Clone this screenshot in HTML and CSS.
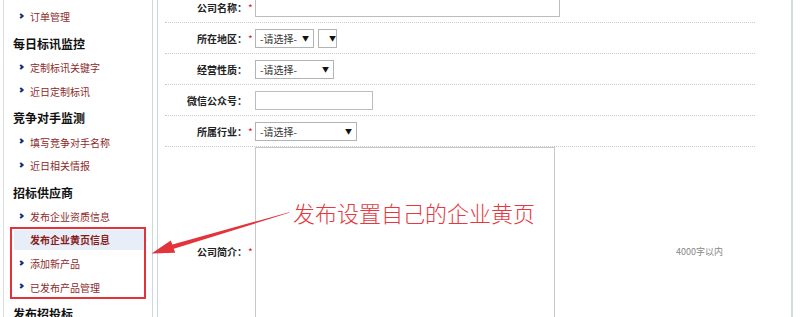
FILE: index.html
```html
<!DOCTYPE html>
<html lang="zh-CN">
<head>
    <meta charset="UTF-8">
    <title>企业黄页</title>
    <link rel="stylesheet" href="styles.css">
</head>
<body>
    <div class="page">
        <div class="sidebar">
            <ul class="menu">
                <li class="item">订单管理</li>
                <li class="head">每日标讯监控</li>
                <li class="item">定制标讯关键字</li>
                <li class="item">近日定制标讯</li>
                <li class="head">竞争对手监测</li>
                <li class="item">填写竞争对手名称</li>
                <li class="item">近日相关情报</li>
                <li class="head">招标供应商</li>
                <li class="item">发布企业资质信息</li>
                <li class="item active">发布企业黄页信息</li>
                <li class="item">添加新产品</li>
                <li class="item">已发布产品管理</li>
                <li class="head">发布招投标</li>
            </ul>
        </div>

        <div class="main">
            <div class="form">
                <div class="row">
                    <label class="lbl">公司名称：</label><span class="req">*</span>
                    <input type="text" class="text name">
                </div>
                <div class="row">
                    <label class="lbl">所在地区：</label><span class="req">*</span>
                    <div class="select s-prov"><span>-请选择-</span><i>▼</i></div>
                    <div class="select s-city"><span></span><i>▼</i></div>
                </div>
                <div class="row">
                    <label class="lbl">经营性质：</label><span class="req"></span>
                    <div class="select s-type"><span>-请选择-</span><i>▼</i></div>
                </div>
                <div class="row">
                    <label class="lbl">微信公众号：</label><span class="req"></span>
                    <input type="text" class="text wechat">
                </div>
                <div class="row">
                    <label class="lbl">所属行业：</label><span class="req">*</span>
                    <div class="select s-trade"><span>-请选择-</span><i>▼</i></div>
                </div>
                <div class="row last">
                    <label class="lbl">公司简介：</label><span class="req">*</span>
                    <textarea class="intro"></textarea>
                    <span class="hint">4000字以内</span>
                </div>
            </div>
        </div>
    </div>

    <!-- annotation drawn over the screenshot -->
    <div class="hl-box"></div>
    <div class="note">发布设置自己的企业黄页</div>
    <svg class="arrow" width="800" height="317" viewBox="0 0 800 317">
        <polygon fill="#e3343c" points="289,212.2 172.4,244.6 170.8,240.6 151.5,253.4 175.2,252.8 173.8,248.8 289.2,212.8"/>
    </svg>
</body>
</html>
```

FILE: styles.css
```css
body {
    margin: 0;
    background: #fff;
    font-family: "Noto Sans CJK SC", "Liberation Sans", sans-serif;
    overflow: hidden;
    width: 800px;
    height: 317px;
    position: relative;
}

.page {
    display: flex;
    align-items: flex-start;
    height: 317px;
}

/* left menu */
.sidebar {
    width: 148px;
    height: 317px;
    margin-left: 3px;
    border-left: 1px solid #d5dde5;
    border-right: 1px solid #cdd6de;
}

.menu {
    list-style: none;
    margin: 0;
    padding: 5px 0 0 0;
}

.menu .item {
    position: relative;
    padding-left: 26px;
    height: 23.5px;
    line-height: 23.5px;
    font-size: 10px;
    color: #8c2a2a;
    white-space: nowrap;
}

.menu .item::before {
    content: "";
    position: absolute;
    left: 15px;
    top: 8.5px;
    width: 2px;
    height: 2px;
    border-top: 2px solid #16307a;
    border-right: 2px solid #16307a;
    transform: rotate(45deg);
}

.menu .item.active {
    margin: 1.75px 6px 1.75px 10px;
    padding-left: 16px;
    height: 20px;
    line-height: 20px;
    background: #e7eef8;
    font-weight: bold;
    color: #8a1c1c;
}

.menu .item.active::before {
    display: none;
}

.menu .head {
    padding: 3px 0 0 9px;
    height: 24.5px;
    line-height: 24.5px;
    font-size: 12px;
    font-weight: bold;
    color: #111;
}

/* form panel */
.main {
    width: 633px;
    height: 317px;
    margin-left: 4px;
    border-left: 1px solid #cdd6de;
    border-right: 2px solid #d3dfdf;
}

.form {
    width: 590px;
    margin: -8px 0 0 7px;
}

.row {
    display: flex;
    align-items: center;
    height: 30px;
    border-bottom: 1px dotted #cacaca;
}

.row.last {
    height: auto;
    border-bottom: none;
}

.lbl {
    width: 82px;
    text-align: right;
    font-size: 10px;
    font-weight: bold;
    color: #222;
    white-space: nowrap;
}

.req {
    width: 7px;
    padding-left: 1px;
    font-size: 10px;
    color: #d42020;
}

.text {
    box-sizing: border-box;
    height: 19px;
    margin: 0;
    padding: 0;
    border: 1px solid #bdbdbd;
    background: #fff;
}

.name { width: 305px; }
.wechat { width: 118px; }

.select {
    box-sizing: border-box;
    display: flex;
    align-items: center;
    justify-content: space-between;
    height: 19px;
    padding: 0 4px 0 4px;
    border: 1px solid #b3b3b3;
    background: #fff;
    font-size: 10px;
    color: #333;
}

.select i {
    font-style: normal;
    font-size: 7px;
    color: #111;
}

.s-prov { width: 59px; }
.s-city { width: 19px; margin-left: 4px; padding: 0 0 0 5px; }
.s-type { width: 79px; }
.s-trade { width: 102px; }

.intro {
    box-sizing: border-box;
    width: 300px;
    height: 208px;
    margin: 0;
    border: 1px solid #c8c8c8;
    resize: none;
}

.hint {
    margin-left: 121px;
    font-size: 9px;
    color: #888;
}

/* annotation */
.hl-box {
    position: absolute;
    left: 10px;
    top: 227px;
    width: 132px;
    height: 68px;
    border: 2px solid #e2323a;
}

.note {
    position: absolute;
    left: 293px;
    top: 198px;
    font-size: 22px;
    line-height: 28px;
    font-weight: 300;
    color: #e5383f;
    white-space: nowrap;
}

.arrow {
    position: absolute;
    left: 0;
    top: 0;
    pointer-events: none;
}
```
